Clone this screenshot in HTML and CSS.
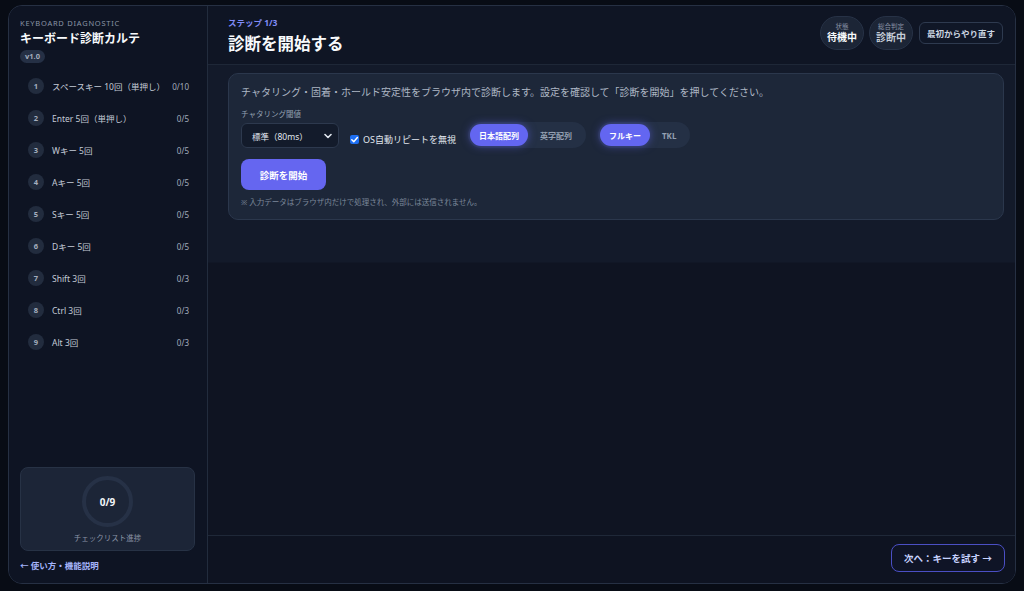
FILE: index.html
```html
<!DOCTYPE html>
<html lang="ja">
<head>
<meta charset="utf-8">
<title>キーボード診断カルテ</title>
<link rel="stylesheet" href="styles.css">
</head>
<body>
<div class="app">
  <aside class="sidebar">
    <div class="brand">
      <div class="eyebrow">KEYBOARD DIAGNOSTIC</div>
      <h1 class="app-title">キーボード診断カルテ</h1>
      <span class="version">v1.0</span>
    </div>
    <ol class="steps">
      <li class="step"><span class="num">1</span><span class="label">スペースキー 10回（単押し）</span><span class="count">0/10</span></li>
      <li class="step"><span class="num">2</span><span class="label">Enter 5回（単押し）</span><span class="count">0/5</span></li>
      <li class="step"><span class="num">3</span><span class="label">Wキー 5回</span><span class="count">0/5</span></li>
      <li class="step"><span class="num">4</span><span class="label">Aキー 5回</span><span class="count">0/5</span></li>
      <li class="step"><span class="num">5</span><span class="label">Sキー 5回</span><span class="count">0/5</span></li>
      <li class="step"><span class="num">6</span><span class="label">Dキー 5回</span><span class="count">0/5</span></li>
      <li class="step"><span class="num">7</span><span class="label">Shift 3回</span><span class="count">0/3</span></li>
      <li class="step"><span class="num">8</span><span class="label">Ctrl 3回</span><span class="count">0/3</span></li>
      <li class="step"><span class="num">9</span><span class="label">Alt 3回</span><span class="count">0/3</span></li>
    </ol>
    <div class="progress-card">
      <div class="ring"><span class="ring-value">0/9</span></div>
      <div class="progress-label">チェックリスト進捗</div>
    </div>
    <a class="help-link" href="#">← 使い方・機能説明</a>
  </aside>

  <main class="main">
    <header class="main-header">
      <div class="titles">
        <div class="step-label">ステップ 1/3</div>
        <h2 class="page-title">診断を開始する</h2>
      </div>
      <div class="header-actions">
        <div class="pill"><span class="pill-label">状態</span><span class="pill-value">待機中</span></div>
        <div class="pill"><span class="pill-label">総合判定</span><span class="pill-value muted">診断中</span></div>
        <button class="ghost-btn" type="button">最初からやり直す</button>
      </div>
    </header>

    <section class="content">
      <div class="card">
        <p class="intro">チャタリング・固着・ホールド安定性をブラウザ内で診断します。設定を確認して「診断を開始」を押してください。</p>
        <div class="controls">
          <div class="field">
            <span class="field-label">チャタリング閾値</span>
            <div class="select">
              <span>標準（80ms）</span>
              <svg class="chev" width="8" height="6" viewBox="0 0 8 6"><path d="M1 1.5 L4 4.5 L7 1.5" fill="none" stroke="#e2e8f0" stroke-width="1.6" stroke-linecap="round" stroke-linejoin="round"/></svg>
            </div>
          </div>
          <label class="check">
            <span class="box"><svg width="9" height="9" viewBox="0 0 10 10"><path d="M2 5.2 L4.2 7.4 L8.2 2.8" fill="none" stroke="#fff" stroke-width="1.6" stroke-linecap="round" stroke-linejoin="round"/></svg></span>
            <span>OS自動リピートを無視</span>
          </label>
          <div class="segment">
            <button class="seg active" type="button">日本語配列</button>
            <button class="seg" type="button">英字配列</button>
          </div>
          <div class="segment">
            <button class="seg active" type="button">フルキー</button>
            <button class="seg" type="button">TKL</button>
          </div>
        </div>
        <button class="primary-btn" type="button">診断を開始</button>
        <p class="note">※ 入力データはブラウザ内だけで処理され、外部には送信されません。</p>
      </div>
    </section>

    <footer class="main-footer">
      <button class="next-btn" type="button">次へ：キーを試す →</button>
    </footer>
  </main>
</div>
</body>
</html>
```

FILE: styles.css
```css
* { box-sizing: border-box; }

html, body {
  margin: 0;
  padding: 0;
  background: #080c15;
}

body {
  padding: 5px 8px 7px 8px;
  font-family: "Noto Sans", "Noto Sans CJK JP", sans-serif;
  color: #e2e8f0;
}

.app {
  height: 579px;
  display: flex;
  border: 1px solid #263043;
  border-radius: 14px;
  overflow: hidden;
  background: #0f1524;
}

/* Sidebar */
.sidebar {
  width: 199px;
  flex: none;
  border-right: 1px solid #222c3d;
  background: #0e1423;
  padding: 12px 12px 11px 11px;
  display: flex;
  flex-direction: column;
}

.eyebrow {
  font-size: 7.5px;
  letter-spacing: 0.75px;
  color: #8a94a6;
  line-height: 10px;
}

.app-title {
  margin: 3px 0 0 0;
  font-size: 12px;
  font-weight: 700;
  color: #f8fafc;
  line-height: 16px;
}

.version {
  display: inline-block;
  margin-top: 3px;
  padding: 0 5px;
  height: 13px;
  line-height: 13px;
  border-radius: 7px;
  background: #253045;
  color: #a3adbd;
  font-size: 7.5px;
  font-weight: 700;
}

.brand { display: flex; flex-direction: column; align-items: flex-start; }

.steps {
  list-style: none;
  margin: 7px 0 0 0;
  padding: 0;
  flex: 1;
}

.step {
  height: 32px;
  display: flex;
  align-items: center;
  padding: 0 6px 0 8px;
  gap: 8px;
}

.num {
  width: 16px;
  height: 16px;
  border-radius: 50%;
  background: #222c3e;
  color: #a5afbf;
  font-size: 7.5px;
  font-weight: 700;
  display: flex;
  align-items: center;
  justify-content: center;
  flex: none;
}

.label {
  flex: 1;
  min-width: 0;
  font-size: 8.5px;
  color: #c4cbd7;
  white-space: nowrap;
}

.count {
  flex: none;
  font-size: 8px;
  color: #a3adbd;
}

.progress-card {
  height: 84px;
  border: 1px solid #273245;
  border-radius: 8px;
  background: #1c2537;
  display: flex;
  flex-direction: column;
  align-items: center;
  padding-top: 8px;
}

.ring {
  width: 51px;
  height: 51px;
  border-radius: 50%;
  border: 4px solid #263146;
  display: flex;
  align-items: center;
  justify-content: center;
}

.ring-value {
  font-size: 10px;
  font-weight: 700;
  color: #f1f5f9;
}

.progress-label {
  margin-top: 5px;
  font-size: 7.5px;
  color: #8a94a6;
}

.help-link {
  margin-top: 9px;
  font-size: 8.5px;
  font-weight: 700;
  color: #a5b4fc;
  text-decoration: none;
  line-height: 12px;
}

/* Main */
.main {
  flex: 1;
  display: flex;
  flex-direction: column;
  min-width: 0;
  background: #0f1422;
}

.main-header {
  height: 59px;
  flex: none;
  border-bottom: 1px solid #1e2737;
  padding: 11px 12px 0 20px;
  display: flex;
  justify-content: space-between;
  align-items: flex-start;
  background: #0f1524;
}

.step-label {
  font-size: 8.5px;
  font-weight: 700;
  color: #818cf8;
  line-height: 12px;
}

.page-title {
  margin: 4px 0 0 0;
  font-size: 16.5px;
  font-weight: 700;
  color: #f8fafc;
  line-height: 22px;
}

.header-actions {
  display: flex;
  align-items: center;
  gap: 5px;
  margin-top: -1px;
}

.pill {
  width: 44px;
  height: 34px;
  border-radius: 17px;
  background: #1c2536;
  border: 1px solid #273246;
  display: flex;
  flex-direction: column;
  align-items: center;
  justify-content: center;
  line-height: 1.2;
}

.pill-label {
  font-size: 6.5px;
  color: #8a94a6;
}

.pill-value {
  font-size: 10px;
  font-weight: 700;
  color: #f8fafc;
}

.pill-value.muted { color: #c5cdd9; }

.ghost-btn {
  margin-left: 1px;
  height: 22px;
  padding: 0 7px;
  border: 1px solid #2e3a4f;
  border-radius: 6px;
  background: #101727;
  color: #cbd5e1;
  font-family: inherit;
  font-size: 8.5px;
  font-weight: 700;
}

.content {
  flex: 1;
  padding: 8px 11px 0 20px;
  background: linear-gradient(to bottom, #131a2a 0, #131a2a 197px, #0f1422 198px);
}

.card {
  border: 1px solid #2b374c;
  border-radius: 10px;
  background: #1d2739;
  padding: 10px 12px 11px 12px;
}

.intro {
  margin: 0;
  font-size: 10px;
  color: #aeb7c5;
  line-height: 16px;
}

.controls {
  margin-top: 9px;
  display: flex;
  align-items: flex-end;
  gap: 12px;
}

.field {
  display: flex;
  flex-direction: column;
  gap: 4px;
}

.field-label {
  font-size: 7.5px;
  color: #94a0b2;
  line-height: 10px;
}

.select {
  width: 98px;
  height: 25px;
  border: 1px solid #2d394e;
  border-radius: 6px;
  background: #131b2b;
  display: flex;
  align-items: center;
  justify-content: space-between;
  padding: 0 6px 0 10px;
  font-size: 8.5px;
  color: #e2e8f0;
}

.chev { margin-top: 1px; }

.check {
  display: flex;
  align-items: center;
  gap: 4px;
  font-size: 9px;
  color: #e2e8f0;
  padding-bottom: 2px;
  margin-left: -1px;
}

.box {
  width: 9px;
  height: 9px;
  border-radius: 2px;
  background: #1d6ef2;
  display: flex;
  align-items: center;
  justify-content: center;
}

.segment {
  height: 26px;
  padding: 2px;
  border-radius: 13px;
  background: #243045;
  display: flex;
  align-items: center;
}

.seg {
  height: 22px;
  border: 0;
  border-radius: 11px;
  background: transparent;
  color: #94a0b2;
  font-family: inherit;
  font-size: 8px;
  font-weight: 700;
  padding: 0 12px;
}

.seg.active {
  background: #6366f1;
  color: #ffffff;
  padding: 0 9px;
  box-shadow: 0 0 8px rgba(99, 102, 241, 0.55);
}

.primary-btn {
  display: block;
  margin-top: 11px;
  width: 85px;
  height: 31px;
  border: 0;
  border-radius: 8px;
  background: #6566f0;
  color: #ffffff;
  font-family: inherit;
  font-size: 9.5px;
  font-weight: 700;
}

.note {
  margin: 6px 0 0 0;
  font-size: 7.5px;
  color: #7c879a;
  line-height: 12px;
}

.main-footer {
  height: 48px;
  flex: none;
  border-top: 1px solid #1f2838;
  display: flex;
  justify-content: flex-end;
  align-items: flex-start;
  padding: 8px 10px 0 20px;
  background: #0e1321;
}

.next-btn {
  height: 28px;
  padding: 0 12px;
  border: 1px solid #4b4fc4;
  border-radius: 8px;
  background: #0f1426;
  color: #c7d2fe;
  font-family: inherit;
  font-size: 9.5px;
  font-weight: 700;
}
```
